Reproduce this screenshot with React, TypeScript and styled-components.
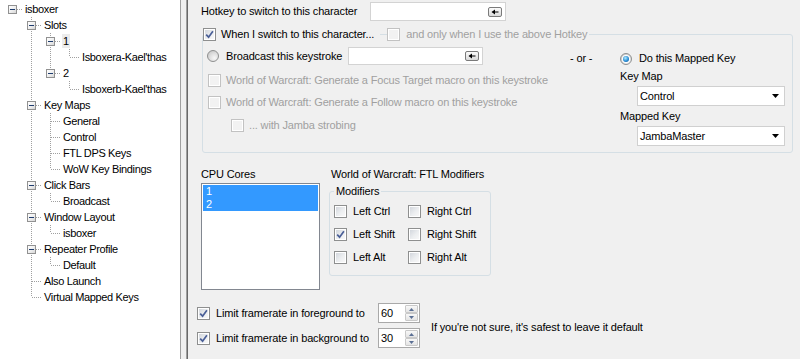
import React from 'react';
import styled, { createGlobalStyle, css } from 'styled-components';

const GlobalStyle = createGlobalStyle`
  html, body { margin: 0; padding: 0; background: #f0f0f0; }
  body {
    font-family: "Liberation Sans", Arial, sans-serif;
    font-size: 11px;
    letter-spacing: -0.15px;
    color: #000;
  }
  * { box-sizing: border-box; }
`;

const Window = styled.div`
  display: flex;
  width: 800px;
  height: 359px;
  overflow: hidden;
  background: #f0f0f0;
`;

/* ---------------- Tree ---------------- */

const TreePanel = styled.div`
  flex: none;
  width: 181px;
  background: #fff;
  border-right: 1px solid #a0a0a0;
  padding: 1px 0 0 4px;
  display: flex;
  flex-direction: column;
`;

const TreeRow = styled.div`
  display: flex;
  align-items: center;
  height: 16px;
  flex: none;
`;

const dotsV = 'repeating-linear-gradient(to bottom, #a0a0a0 0 1px, transparent 1px 2px)';
const dotsH = 'repeating-linear-gradient(to right, #a0a0a0 0 1px, transparent 1px 2px)';

const GuideCell = styled.span<{ $line: boolean }>`
  position: relative;
  flex: none;
  width: 19px;
  height: 16px;
  ${(p) =>
    p.$line &&
    css`
      &::before {
        content: '';
        position: absolute;
        left: 8px;
        top: 0;
        width: 1px;
        height: 16px;
        background: ${dotsV};
      }
    `}
`;

const NodeCell = styled.span<{ $top: boolean; $bottom: boolean }>`
  position: relative;
  flex: none;
  width: 19px;
  height: 16px;
  &::before {
    content: '';
    position: absolute;
    left: 8px;
    top: ${(p) => (p.$top ? '0' : '8px')};
    width: 1px;
    height: ${(p) => (p.$top && p.$bottom ? '16px' : p.$top || p.$bottom ? '8px' : '0')};
    background: ${dotsV};
  }
  &::after {
    content: '';
    position: absolute;
    left: 9px;
    top: 8px;
    width: 10px;
    height: 1px;
    background: ${dotsH};
  }
`;

const Expander = styled.span`
  position: absolute;
  z-index: 1;
  left: 4px;
  top: 4px;
  width: 9px;
  height: 9px;
  border: 1px solid #919191;
  background: linear-gradient(135deg, #ffffff 0%, #f0f0f0 50%, #d6d6d6 100%);
  display: flex;
  align-items: center;
  justify-content: center;
  &::after {
    content: '';
    width: 5px;
    height: 1px;
    background: #1e3c6e;
  }
`;

const TreeLabel = styled.span<{ $selected?: boolean }>`
  margin-left: 1px;
  padding: 0 1px;
  line-height: 14px;
  letter-spacing: -0.35px;
  white-space: nowrap;
  color: #000;
  background: ${(p) => (p.$selected ? '#ececec' : 'transparent')};
`;

type TreeItem = { label: string; depth: number; exp?: boolean; selected?: boolean };

const treeData: TreeItem[] = [
  { label: 'isboxer', depth: 0, exp: true },
  { label: 'Slots', depth: 1, exp: true },
  { label: '1', depth: 2, exp: true, selected: true },
  { label: "Isboxera-Kael'thas", depth: 3 },
  { label: '2', depth: 2, exp: true },
  { label: "Isboxerb-Kael'thas", depth: 3 },
  { label: 'Key Maps', depth: 1, exp: true },
  { label: 'General', depth: 2 },
  { label: 'Control', depth: 2 },
  { label: 'FTL DPS Keys', depth: 2 },
  { label: 'WoW Key Bindings', depth: 2 },
  { label: 'Click Bars', depth: 1, exp: true },
  { label: 'Broadcast', depth: 2 },
  { label: 'Window Layout', depth: 1, exp: true },
  { label: 'isboxer', depth: 2 },
  { label: 'Repeater Profile', depth: 1, exp: true },
  { label: 'Default', depth: 2 },
  { label: 'Also Launch', depth: 1 },
  { label: 'Virtual Mapped Keys', depth: 1 },
];

function hasNextSibling(i: number): boolean {
  const d = treeData[i].depth;
  for (let j = i + 1; j < treeData.length; j++) {
    if (treeData[j].depth < d) return false;
    if (treeData[j].depth === d) return true;
  }
  return false;
}

function ancestorIndex(i: number, level: number): number {
  for (let j = i; j >= 0; j--) if (treeData[j].depth === level) return j;
  return -1;
}

const Tree = () => (
  <TreePanel>
    {treeData.map((item, i) => {
      const guides = [];
      for (let k = 0; k < item.depth; k++) {
        const a = ancestorIndex(i, k);
        guides.push(<GuideCell key={k} $line={a >= 0 && hasNextSibling(a)} />);
      }
      return (
        <TreeRow key={i}>
          {guides}
          <NodeCell $top={i !== 0} $bottom={hasNextSibling(i)}>
            {item.exp && <Expander />}
          </NodeCell>
          <TreeLabel $selected={item.selected}>{item.label}</TreeLabel>
        </TreeRow>
      );
    })}
  </TreePanel>
);

/* ---------------- Common controls ---------------- */

const Splitter = styled.div`
  flex: none;
  width: 5px;
  background: #f0f0f0;
`;

const Content = styled.div`
  flex: 1;
  min-width: 0;
  border-left: 1px solid #a0a0a0;
  box-shadow: inset 1px 0 #696969;
  padding: 2px 7px 0 15px;
  display: flex;
  flex-direction: column;
`;

const CbOuter = styled.span<{ $disabled?: boolean }>`
  flex: none;
  width: 13px;
  height: 13px;
  border: 1px solid ${(p) => (p.$disabled ? '#c2c2c2' : '#8e8f8f')};
  background: #fff;
  padding: 1px;
  display: inline-flex;
`;

const CbInner = styled.span<{ $disabled?: boolean }>`
  flex: 1;
  display: flex;
  align-items: center;
  justify-content: center;
  background: ${(p) =>
    p.$disabled ? '#f2f2f2' : 'linear-gradient(135deg, #d3d7dd 0%, #eceef0 55%, #f8f8f8 100%)'};
`;

const CheckBox = ({ checked, disabled }: { checked?: boolean; disabled?: boolean }) => (
  <CbOuter $disabled={disabled}>
    <CbInner $disabled={disabled}>
      {checked && (
        <svg width="9" height="9" viewBox="0 0 9 9">
          <path d="M1.2 4.6 L3.6 7.2 L7.9 1.2" fill="none" stroke="#4a5f97" strokeWidth="1.7" />
        </svg>
      )}
    </CbInner>
  </CbOuter>
);

const RadioOuter = styled.span`
  flex: none;
  width: 12px;
  height: 12px;
  border-radius: 50%;
  border: 1px solid #8e8f8f;
  background: radial-gradient(circle at 65% 70%, #f7f7f7 0%, #e0e0e0 45%, #c0c0c0 100%);
  display: inline-flex;
  align-items: center;
  justify-content: center;
`;

const RadioDot = styled.span`
  width: 6px;
  height: 6px;
  border-radius: 50%;
  background: radial-gradient(circle at 40% 35%, #b4ecff 0%, #2a8fd8 55%, #0b4c8c 100%);
  box-shadow: 0 0 0 1px #fff;
`;

const Radio = ({ checked }: { checked?: boolean }) => (
  <RadioOuter>{checked && <RadioDot />}</RadioOuter>
);

const Text = styled.span<{ $disabled?: boolean; $w?: number }>`
  white-space: nowrap;
  line-height: 13px;
  color: ${(p) => (p.$disabled ? '#a0a0a0' : '#000')};
  ${(p) => p.$w !== undefined && `width: ${p.$w}px; flex: none;`}
`;

const TextBox = styled.div<{ $w: number; $h: number }>`
  flex: none;
  width: ${(p) => p.$w}px;
  height: ${(p) => p.$h}px;
  background: #fff;
  border: 1px solid #d3d3d3;
  display: flex;
  align-items: center;
  justify-content: flex-end;
  padding-right: 3px;
`;

const KeyButton = styled.span`
  width: 14px;
  height: 10px;
  border: 1px solid #7a7a7a;
  border-radius: 2px;
  background: linear-gradient(#fbfbfb, #dadada);
  display: flex;
  align-items: center;
  justify-content: center;
`;

const KeyBtn = () => (
  <KeyButton>
    <svg width="8" height="6" viewBox="0 0 8 6">
      <path d="M0.5 3 L4 0.5 L4 5.5 Z" fill="#000" />
      <rect x="3.5" y="2.5" width="4" height="1" fill="#000" />
    </svg>
  </KeyButton>
);

const Combo = styled.div`
  width: 148px;
  height: 20px;
  margin-left: 17px;
  margin-top: 3px;
  background: #fff;
  border: 1px solid #d0d0d0;
  display: flex;
  align-items: center;
  justify-content: space-between;
  padding: 0 4px 0 2px;
`;

const ComboArrow = () => (
  <svg width="8" height="4" viewBox="0 0 8 4">
    <path d="M0 0 H7 L3.5 4 Z" fill="#000" />
  </svg>
);

/* ---------------- Sections ---------------- */

const HotkeyRow = styled.div`
  display: flex;
  align-items: center;
  height: 19px;
  margin-left: -1px;
`;

const Group = styled.fieldset`
  margin: 0;
  padding: 0;
  min-inline-size: 0;
  border: 1px solid #d5dfe5;
  border-radius: 3px;
`;

const SwitchGroup = styled(Group)`
  margin-top: 6px;
`;

const Legend = styled.legend<{ $pad?: number }>`
  padding: 0 ${(p) => p.$pad ?? 0}px;
  display: flex;
  align-items: center;
  height: 14px;
`;

const LegendLine = styled.span`
  width: 7px;
  height: 1px;
  margin: 0 0 0 6px;
  background: #d5dfe5;
`;

const Gap = styled.span<{ $w: number }>`
  flex: none;
  width: ${(p) => p.$w}px;
`;

const GroupBody = styled.div`
  display: flex;
  padding: 6px 6px 6px 4px;
`;

const LeftCol = styled.div`
  flex: none;
  width: 363px;
  display: flex;
  flex-direction: column;
`;

const OptionRow = styled.div<{ $mt?: number; $ml?: number; $h?: number }>`
  display: flex;
  align-items: center;
  height: ${(p) => p.$h ?? 13}px;
  margin-top: ${(p) => p.$mt ?? 0}px;
  margin-left: ${(p) => p.$ml ?? 0}px;
`;

const OrText = styled.span`
  flex: none;
  width: 50px;
  margin-top: 5px;
  line-height: 13px;
  height: 13px;
`;

const RightCol = styled.div`
  flex: none;
  width: 165px;
  display: flex;
  flex-direction: column;
`;

const FieldLabel = styled.div<{ $mt: number }>`
  margin-top: ${(p) => p.$mt}px;
  line-height: 13px;
  height: 13px;
`;

const MidSection = styled.div`
  display: flex;
  margin-top: 15px;
  margin-left: -1px;
`;

const CpuCol = styled.div`
  flex: none;
  width: 119px;
  display: flex;
  flex-direction: column;
`;

const ListBox = styled.div`
  margin-top: 2px;
  height: 107px;
  background: #fff;
  border: 1px solid #828790;
  padding: 1px;
  display: flex;
  flex-direction: column;
`;

const ListItem = styled.div<{ $selected?: boolean }>`
  height: 13px;
  line-height: 13px;
  padding-left: 3px;
  background: ${(p) => (p.$selected ? '#3399ff' : 'transparent')};
  color: ${(p) => (p.$selected ? '#fff' : '#000')};
`;

const FtlCol = styled.div`
  flex: none;
  margin-left: 9px;
  display: flex;
  flex-direction: column;
`;

const FtlTitle = styled.div`
  margin-left: 2px;
  line-height: 13px;
  height: 13px;
`;

const ModGroup = styled(Group)`
  width: 162px;
  margin-top: 3px;
  padding: 0 0 11px 4px;
`;

const ModGrid = styled.div`
  display: grid;
  grid-template-columns: 74px 80px;
  row-gap: 10px;
  padding-top: 7px;
`;

const CheckItem = styled.label`
  display: flex;
  align-items: center;
  height: 13px;
  gap: 6px;
  line-height: 13px;
  white-space: nowrap;
`;

const BottomSection = styled.div`
  display: flex;
  align-items: center;
  margin-top: 13px;
  margin-left: -5px;
`;

const FrameCol = styled.div`
  display: flex;
  flex-direction: column;
  gap: 5px;
`;

const FrameRow = styled.div`
  display: flex;
  align-items: center;
  height: 20px;
`;

const Spinner = styled.div`
  flex: none;
  width: 42px;
  height: 20px;
  border: 1px solid #a9a9a9;
  background: #fff;
  display: flex;
`;

const SpinValue = styled.span`
  flex: 1;
  padding-left: 2px;
  line-height: 18px;
`;

const SpinButtons = styled.div`
  width: 14px;
  display: flex;
  flex-direction: column;
  padding: 1px 1px 1px 0;
`;

const SpinButton = styled.span`
  flex: 1;
  border: 1px solid #c9c9c9;
  border-radius: 1px;
  background: linear-gradient(#f8f8f8, #e4e4e4);
  display: flex;
  align-items: center;
  justify-content: center;
`;

const SpinArrow = ({ up }: { up?: boolean }) => (
  <svg width="5" height="3" viewBox="0 0 5 3">
    <path d={up ? 'M0 3 L2.5 0 L5 3 Z' : 'M0 0 L5 0 L2.5 3 Z'} fill="#5a6f94" />
  </svg>
);

const Note = styled.span`
  margin-left: 11px;
  margin-top: 2px;
  white-space: nowrap;
`;

export default function App() {
  return (
    <>
      <GlobalStyle />
      <Window>
        <Tree />
        <Splitter />
        <Content>
          <HotkeyRow>
            <Text $w={169}>Hotkey to switch to this character</Text>
            <TextBox $w={136} $h={19}>
              <KeyBtn />
            </TextBox>
          </HotkeyRow>

          <SwitchGroup>
            <Legend>
              <CheckBox checked />
              <Gap $w={5} />
              <Text>When I switch to this character...</Text>
              <LegendLine />
              <CheckBox disabled />
              <Gap $w={6} />
              <Text $disabled>and only when I use the above Hotkey</Text>
              <Gap $w={2} />
            </Legend>
            <GroupBody>
              <LeftCol>
                <OptionRow $h={18}>
                  <Radio />
                  <Gap $w={7} />
                  <Text $w={122}>Broadcast this keystroke</Text>
                  <TextBox $w={135} $h={18}>
                    <KeyBtn />
                  </TextBox>
                </OptionRow>
                <OptionRow $mt={9} $ml={1}>
                  <CheckBox disabled />
                  <Gap $w={5} />
                  <Text $disabled>World of Warcraft: Generate a Focus Target macro on this keystroke</Text>
                </OptionRow>
                <OptionRow $mt={9} $ml={1}>
                  <CheckBox disabled />
                  <Gap $w={5} />
                  <Text $disabled>World of Warcraft: Generate a Follow macro on this keystroke</Text>
                </OptionRow>
                <OptionRow $mt={10} $ml={24}>
                  <CheckBox disabled />
                  <Gap $w={5} />
                  <Text $disabled>... with Jamba strobing</Text>
                </OptionRow>
              </LeftCol>
              <OrText>- or -</OrText>
              <RightCol>
                <OptionRow $mt={5}>
                  <Radio checked />
                  <Gap $w={7} />
                  <Text>Do this Mapped Key</Text>
                </OptionRow>
                <FieldLabel $mt={5}>Key Map</FieldLabel>
                <Combo>
                  <span>Control</span>
                  <ComboArrow />
                </Combo>
                <FieldLabel $mt={4}>Mapped Key</FieldLabel>
                <Combo>
                  <span>JambaMaster</span>
                  <ComboArrow />
                </Combo>
              </RightCol>
            </GroupBody>
          </SwitchGroup>

          <MidSection>
            <CpuCol>
              <Text>CPU Cores</Text>
              <ListBox>
                <ListItem $selected>1</ListItem>
                <ListItem $selected>2</ListItem>
              </ListBox>
            </CpuCol>
            <FtlCol>
              <FtlTitle>World of Warcraft: FTL Modifiers</FtlTitle>
              <ModGroup>
                <Legend $pad={2}>Modifiers</Legend>
                <ModGrid>
                  <CheckItem><CheckBox />Left Ctrl</CheckItem>
                  <CheckItem><CheckBox />Right Ctrl</CheckItem>
                  <CheckItem><CheckBox checked />Left Shift</CheckItem>
                  <CheckItem><CheckBox />Right Shift</CheckItem>
                  <CheckItem><CheckBox />Left Alt</CheckItem>
                  <CheckItem><CheckBox />Right Alt</CheckItem>
                </ModGrid>
              </ModGroup>
            </FtlCol>
          </MidSection>

          <BottomSection>
            <FrameCol>
              <FrameRow>
                <CheckBox checked />
                <Gap $w={6} />
                <Text $w={162}>Limit framerate in foreground to</Text>
                <Spinner>
                  <SpinValue>60</SpinValue>
                  <SpinButtons>
                    <SpinButton><SpinArrow up /></SpinButton>
                    <SpinButton><SpinArrow /></SpinButton>
                  </SpinButtons>
                </Spinner>
              </FrameRow>
              <FrameRow>
                <CheckBox checked />
                <Gap $w={6} />
                <Text $w={162}>Limit framerate in background to</Text>
                <Spinner>
                  <SpinValue>30</SpinValue>
                  <SpinButtons>
                    <SpinButton><SpinArrow up /></SpinButton>
                    <SpinButton><SpinArrow /></SpinButton>
                  </SpinButtons>
                </Spinner>
              </FrameRow>
            </FrameCol>
            <Note>If you're not sure, it's safest to leave it default</Note>
          </BottomSection>
        </Content>
      </Window>
    </>
  );
}
